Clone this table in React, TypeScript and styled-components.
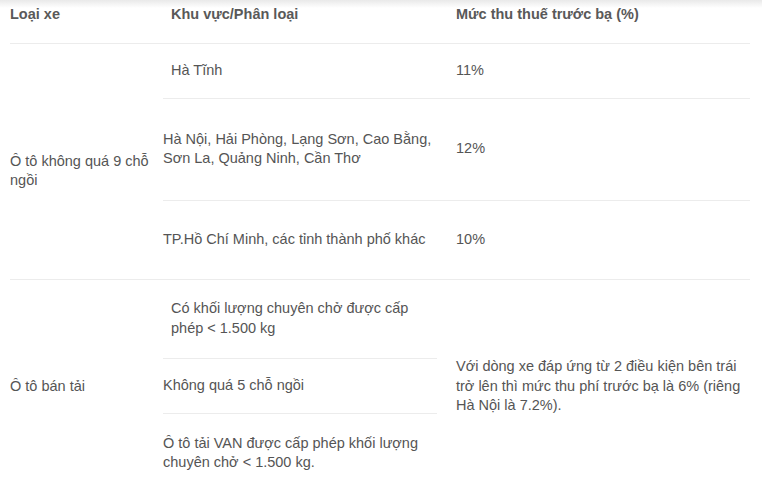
import styled, { createGlobalStyle } from 'styled-components'

const GlobalStyle = createGlobalStyle`
  html, body {
    margin: 0;
    padding: 0;
  }
  body {
    background: linear-gradient(#e9e9e9, #ffffff 8px) no-repeat #ffffff;
    font-family: 'Liberation Sans', Arial, sans-serif;
    color: #555555;
  }
`

const Page = styled('div')`
  padding: 0 12px 0 10px;
`

const Table = styled('table')`
  width: 740px;
  border-collapse: collapse;
  table-layout: fixed;
  font-size: 14.5px;
  line-height: 19.5px;
`

const HeadCell = styled('th')<{ $pad?: number }>`
  height: 43px;
  box-sizing: border-box;
  padding: 5px 0 0 ${({ $pad }) => $pad ?? 0}px;
  vertical-align: top;
  text-align: left;
  font-weight: bold;
  color: #595959;
  border-bottom: 1px solid #ececec;
`

const Row = styled('tr')<{ $h: number }>`
  height: ${({ $h }) => $h}px;
`

const Cell = styled('td')<{ $pad?: number; $top?: number; $line?: boolean }>`
  padding: ${({ $top }) => $top ?? 0}px 0 0 ${({ $pad }) => $pad ?? 0}px;
  vertical-align: middle;
  border-bottom: ${({ $line }) => ($line === false ? 'none' : '1px solid #ececec')};
`

const App: React.FC = () => {
  return (
    <Page>
      <GlobalStyle />
      <Table>
        <colgroup>
          <col style={{ width: 153 }} />
          <col style={{ width: 274 }} />
          <col style={{ width: 313 }} />
        </colgroup>
        <thead>
          <tr>
            <HeadCell>Loại xe</HeadCell>
            <HeadCell $pad={8}>Khu vực/Phân loại</HeadCell>
            <HeadCell $pad={19}>Mức thu thuế trước bạ (%)</HeadCell>
          </tr>
        </thead>
        <tbody>
          <Row $h={55}>
            <Cell rowSpan={3} $top={20}>
              Ô tô không quá 9 chỗ ngồi
            </Cell>
            <Cell $pad={8}>Hà Tĩnh</Cell>
            <Cell $pad={19}>11%</Cell>
          </Row>
          <Row $h={102}>
            <Cell>Hà Nội, Hải Phòng, Lạng Sơn, Cao Bằng, Sơn La, Quảng Ninh, Cần Thơ</Cell>
            <Cell $pad={19}>12%</Cell>
          </Row>
          <Row $h={79}>
            <Cell>TP.Hồ Chí Minh, các tỉnh thành phố khác</Cell>
            <Cell $pad={19}>10%</Cell>
          </Row>
          <Row $h={79}>
            <Cell rowSpan={3} $line={false}>
              Ô tô bán tải
            </Cell>
            <Cell $pad={8}>Có khối lượng chuyên chở được cấp phép &lt; 1.500 kg</Cell>
            <Cell rowSpan={3} $pad={19} $line={false}>
              Với dòng xe đáp ứng từ 2 điều kiện bên trái trở lên thì mức thu phí trước bạ là 6% (riêng
              Hà Nội là 7.2%).
            </Cell>
          </Row>
          <Row $h={55}>
            <Cell>Không quá 5 chỗ ngồi</Cell>
          </Row>
          <Row $h={80}>
            <Cell $line={false}>Ô tô tải VAN được cấp phép khối lượng chuyên chở &lt; 1.500 kg.</Cell>
          </Row>
        </tbody>
      </Table>
    </Page>
  )
}

export default App
